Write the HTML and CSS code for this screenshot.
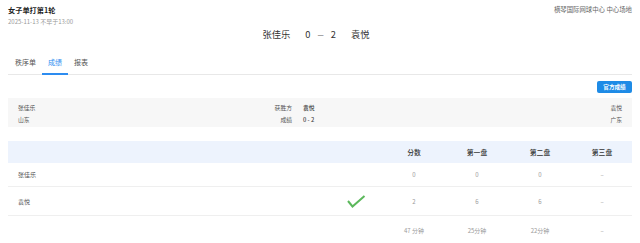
FILE: index.html
```html
<!DOCTYPE html>
<html lang="zh">
<head>
	<meta charset="UTF-8" />
	<title>女子单打第1轮</title>
	<link rel="stylesheet" href="styles.css">
</head>
<body>
	<header class="matchHead">
		<div class="matchInfo">
			<div class="matchTitle">女子单打第1轮</div>
			<div class="matchTime">2025-11-13 不早于13:00</div>
		</div>
		<div class="venue">横琴国际网球中心 中心场地</div>
	</header>

	<div class="scoreLine">
		<span class="player">张佳乐</span>
		<span class="num">0</span>
		<span class="dash">—</span>
		<span class="num">2</span>
		<span class="player">袁悦</span>
	</div>

	<nav class="tabs">
		<a class="tab">秩序单</a>
		<a class="tab active">成绩</a>
		<a class="tab">报表</a>
	</nav>

	<div class="toolbar">
		<button class="officialBtn">官方成绩</button>
	</div>

	<section class="summary">
		<div class="sumRow">
			<span class="sumName">张佳乐</span>
			<span class="sumLabel">获胜方</span>
			<span class="sumValue">袁悦</span>
			<span class="sumRight">袁悦</span>
		</div>
		<div class="sumRow">
			<span class="sumName">山东</span>
			<span class="sumLabel">成绩</span>
			<span class="sumValue">0 - 2</span>
			<span class="sumRight">广东</span>
		</div>
	</section>

	<section class="scoreTable">
		<div class="tRow tHead">
			<span></span>
			<span></span>
			<span class="cell">分数</span>
			<span class="cell">第一盘</span>
			<span class="cell">第二盘</span>
			<span class="cell">第三盘</span>
		</div>
		<div class="tRow">
			<span class="name">张佳乐</span>
			<span></span>
			<span class="cell">0</span>
			<span class="cell">0</span>
			<span class="cell">0</span>
			<span class="cell">–</span>
		</div>
		<div class="tRow tall">
			<span class="name">袁悦</span>
			<span class="cell">
				<svg class="check" width="20" height="13" viewBox="0 0 20 13">
					<path d="M2 6 L6.5 11.5 L18.5 1" fill="none" stroke="#5cb85c" stroke-width="2" />
				</svg>
			</span>
			<span class="cell">2</span>
			<span class="cell">6</span>
			<span class="cell">6</span>
			<span class="cell">–</span>
		</div>
		<div class="tRow tall">
			<span></span>
			<span></span>
			<span class="cell">47 分钟</span>
			<span class="cell">25分钟</span>
			<span class="cell">22分钟</span>
			<span class="cell">–</span>
		</div>
	</section>
</body>
</html>
```

FILE: styles.css
```css
body {
	font-family: "Noto Sans CJK SC", "Noto Sans", sans-serif;
	background: white;
	color: #555;
	margin: 0;
	padding: 4px 8px 0;
}

.matchHead {
	display: flex;
	justify-content: space-between;
	align-items: flex-start;
}

.matchTitle {
	font-size: 7.2px;
	font-weight: bold;
	color: #1f1f1f;
	line-height: 12px;
}

.matchTime {
	margin-top: 2px;
	font-size: 6px;
	line-height: 8px;
	color: #999;
}

.venue {
	font-size: 6.4px;
	line-height: 12px;
	color: #666;
}

.scoreLine {
	margin-top: 2px;
	display: flex;
	justify-content: center;
	align-items: center;
	gap: 7px;
	padding-right: 8px;
	font-size: 9.3px;
	line-height: 12px;
	color: #333;
}

.scoreLine .player:first-child {
	margin-right: 8px;
}

.scoreLine .player:last-child {
	margin-left: 8px;
}

.scoreLine .dash {
	font-size: 7px;
}

.tabs {
	margin-top: 12px;
	display: flex;
	border-bottom: 1px solid #e8e8e8;
}

.tab {
	padding: 4px 6px 5px;
	font-size: 7px;
	line-height: 12px;
	color: #555;
	border-bottom: 2px solid transparent;
	margin-bottom: -1px;
}

.tab:first-child {
	padding-left: 7px;
}

.tab.active {
	color: #2d8cf0;
	border-bottom-color: #2d8cf0;
}

.toolbar {
	margin-top: 6px;
	display: flex;
	justify-content: flex-end;
}

.officialBtn {
	font-family: inherit;
	font-size: 5.6px;
	font-weight: bold;
	color: white;
	background: #1e8be6;
	border: 0;
	border-radius: 2px;
	width: 35px;
	height: 12px;
	padding: 0;
	line-height: 12px;
}

.summary {
	margin-top: 5px;
	background: #f7f7f7;
	padding: 4px 10px 1px;
	font-size: 5.8px;
	line-height: 12px;
	color: #555;
}

.sumRow {
	display: grid;
	grid-template-columns: 224px 50px 1fr auto;
}

.sumLabel {
	text-align: right;
}

.sumValue {
	padding-left: 11px;
	font-weight: 500;
	color: #444;
}

.scoreTable {
	margin-top: 14px;
	font-size: 6px;
}

.tRow {
	display: grid;
	grid-template-columns: 1fr 52px 64px 62px 64px 60px;
	align-items: center;
	height: 23px;
	border-bottom: 1px solid #efefef;
}

.tRow.tHead {
	height: 22px;
	background: #edf3fd;
	border-bottom: 0;
	font-size: 6.8px;
	font-weight: 500;
	color: #333;
}

.tRow.tall {
	height: 28px;
}

.name {
	padding-left: 10px;
	color: #555;
}

.cell {
	text-align: center;
	color: #999;
}

.tHead .cell {
	color: #333;
}

.check {
	display: block;
	margin: 0 auto;
}
```
